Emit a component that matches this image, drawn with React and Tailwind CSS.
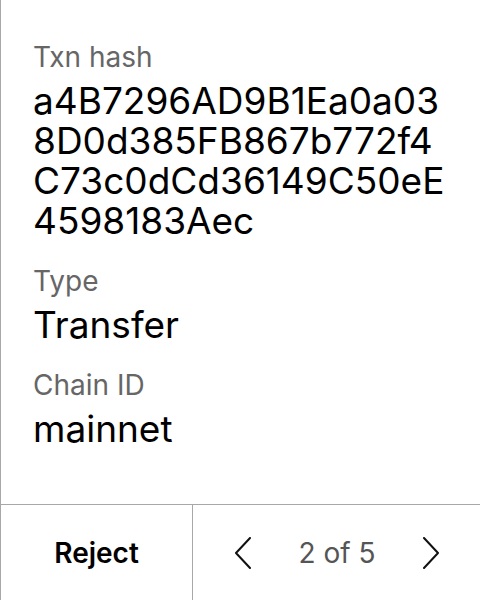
export default function App() {
  const fields = [
    { label: 'Txn hash', value: 'a4B7296AD9B1Ea0a038D0d385FB867b772f4C73c0dCd36149C50eE4598183Aec' },
    { label: 'Type', value: 'Transfer' },
    { label: 'Chain ID', value: 'mainnet' },
  ]

  return (
    <div className="w-[480px] h-[600px] bg-white border-l border-[#a8a8a8] flex flex-col font-['Inter',sans-serif] text-black">
      <div className="flex-1 flex flex-col gap-6 pl-8 pr-8 pt-[41px]">
        {fields.map(f => (
          <div key={f.label} className="flex flex-col gap-2">
            <p className="text-[28px] leading-[32px] text-[#666]">{f.label}</p>
            <p className="text-[37px] leading-[40px] break-all">{f.value}</p>
          </div>
        ))}
      </div>
      <div className="h-[96px] border-t border-[#a8a8a8] flex">
        <button className="w-[192px] border-r border-[#a8a8a8] flex items-center justify-center text-[28px] font-semibold">
          Reject
        </button>
        <div className="flex-1 flex items-center justify-between pl-[41px] pr-[40px]">
          <button className="p-0">
            <svg width="18" height="32" viewBox="0 0 18 32" fill="none" stroke="#111" strokeWidth="2" strokeLinecap="round" strokeLinejoin="round">
              <path d="M16 1 2 16l14 15" />
            </svg>
          </button>
          <span className="text-[28px] text-[#555]">2 of 5</span>
          <button className="p-0">
            <svg width="18" height="32" viewBox="0 0 18 32" fill="none" stroke="#111" strokeWidth="2" strokeLinecap="round" strokeLinejoin="round">
              <path d="M2 1l14 15L2 31" />
            </svg>
          </button>
        </div>
      </div>
    </div>
  )
}
